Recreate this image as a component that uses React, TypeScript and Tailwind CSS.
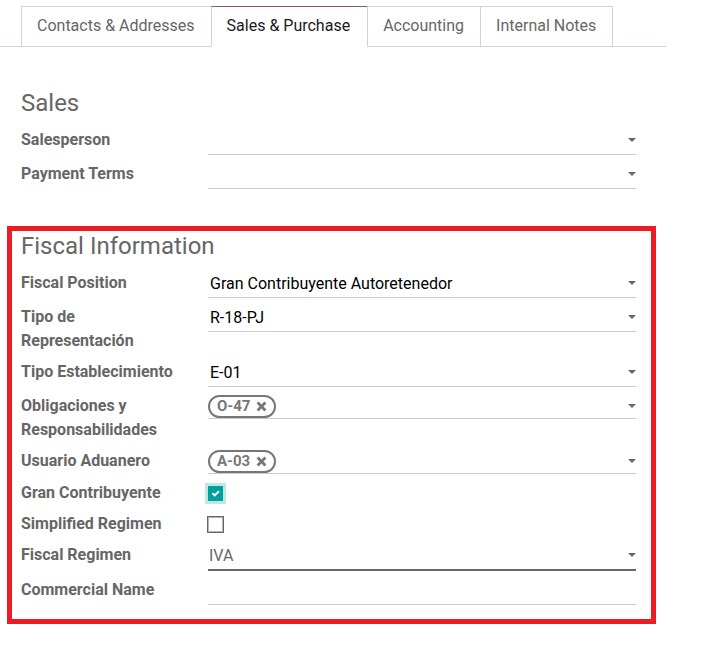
import React, { useState } from "react";

const tabs = ["Contacts & Addresses", "Sales & Purchase", "Accounting", "Internal Notes"];

function Caret() {
  return (
    <svg
      viewBox="0 0 8 4"
      className="pointer-events-none absolute top-2.5 right-0 h-1 w-2 fill-[#666666]"
      aria-hidden="true"
    >
      <path d="M0 0h8L4 4z" />
    </svg>
  );
}

function Row({ id, label, children }: { id: string; label: string; children: React.ReactNode }) {
  return (
    <div className="flex items-start">
      <label htmlFor={id} className="w-[187px] shrink-0 pr-6 leading-6 font-bold">
        {label}
      </label>
      <div className="min-w-0 flex-1">{children}</div>
    </div>
  );
}

function SelectField({ id, label, value = "" }: { id: string; label: string; value?: string }) {
  return (
    <Row id={id} label={label}>
      <div className="relative h-[27px] border-b border-[#cccccc]">
        <select id={id} defaultValue={value} className="block h-full w-full appearance-none px-0.5 text-black outline-none">
          <option value={value}>{value}</option>
        </select>
        <Caret />
      </div>
    </Row>
  );
}

function TagField({ id, label, tag }: { id: string; label: string; tag: string }) {
  return (
    <Row id={id} label={label}>
      <div className="relative flex h-[25px] items-center border-b border-[#cccccc]">
        <span className="flex h-[23px] items-center gap-1.5 rounded-full border-2 border-[#777777] px-[7px] text-[15px] leading-5 font-bold text-[#777777]">
          {tag}
          <button type="button" aria-label={`Remove ${tag}`} className="block">
            <svg viewBox="0 0 11 11" className="h-[11px] w-[11px]" fill="currentColor" aria-hidden="true">
              <path d="M2.6.6 5.5 3.5 8.4.6l2 2-2.9 2.9 2.9 2.9-2 2-2.9-2.9-2.9 2.9-2-2 2.9-2.9L.6 2.6z" />
            </svg>
          </button>
        </span>
        <select id={id} className="h-full min-w-0 flex-1 appearance-none outline-none" defaultValue="">
          <option value=""></option>
        </select>
        <Caret />
      </div>
    </Row>
  );
}

function CheckField({ id, label, checked = false }: { id: string; label: string; checked?: boolean }) {
  const [on, setOn] = useState(checked);
  return (
    <Row id={id} label={label}>
      <div className="flex h-6 items-center">
        <span className="relative flex">
          <input
            id={id}
            type="checkbox"
            checked={on}
            onChange={(e) => setOn(e.target.checked)}
            className="h-[15px] w-[15px] appearance-none border border-[#adb5bd] bg-white ring-1 ring-[#666666] checked:border-[#00a09d] checked:bg-[#00a09d] checked:ring-3 checked:ring-[#bfe7e6]"
          />
          {on && (
            <svg viewBox="0 0 15 15" className="pointer-events-none absolute inset-0 h-[15px] w-[15px]" aria-hidden="true">
              <path d="M4.5 7.3 6.7 9.4 11 5.2" fill="none" stroke="#ffffff" strokeWidth="2" />
            </svg>
          )}
        </span>
      </div>
    </Row>
  );
}

export default function App() {
  const [active, setActive] = useState(1);
  return (
    <main className="bg-white pt-1.5 pr-[41px] font-['Roboto','Liberation_Sans',sans-serif] text-base text-[#666666]">
      <div role="tablist" className="flex border-b border-[#ced4da] pl-[21px]">
        {tabs.map((tab, i) => (
          <button
            key={tab}
            type="button"
            role="tab"
            aria-selected={i === active}
            onClick={() => setActive(i)}
            className={`-mb-px h-[41px] border pr-4 pl-[15px] pb-0.5 whitespace-nowrap ${i > 0 ? "-ml-px" : ""} ${
              i === active
                ? "border-x-[#ced4da] border-t-[#875a7b] border-b-white pr-[17px] text-[#1a1a1a]"
                : "border-[#ced4da]"
            }`}
          >
            {tab}
          </button>
        ))}
      </div>

      <section className="mt-[41px] pr-[30px] pl-[21px]">
        <h2 className="mb-2.5 text-2xl leading-[30px]">Sales</h2>
        <div className="flex flex-col gap-[7px]">
          <SelectField id="salesperson" label="Salesperson" />
          <SelectField id="payment-terms" label="Payment Terms" />
        </div>
      </section>

      <section className="mt-[37px] mr-2.5 ml-[7px] border-5 border-[#ed1c24] pr-[15px] pb-[14px] pl-[9px]">
        <h2 className="mb-2.5 text-2xl leading-[30px]">Fiscal Information</h2>
        <div className="flex flex-col gap-[7px]">
          <SelectField id="fiscal-position" label="Fiscal Position" value="Gran Contribuyente Autoretenedor" />
          <SelectField id="representacion" label="Tipo de Representación" value="R-18-PJ" />
          <SelectField id="establecimiento" label="Tipo Establecimiento" value="E-01" />
          <TagField id="obligaciones" label="Obligaciones y Responsabilidades" tag="O-47" />
          <TagField id="aduanero" label="Usuario Aduanero" tag="A-03" />
          <CheckField id="gran-contribuyente" label="Gran Contribuyente" checked />
          <CheckField id="simplified" label="Simplified Regimen" />
          <Row id="fiscal-regimen" label="Fiscal Regimen">
            <div className="relative h-7 border-b-2 border-[#666666]">
              <select id="fiscal-regimen" className="block h-full w-full appearance-none px-px outline-none" defaultValue="IVA">
                <option value="IVA">IVA</option>
              </select>
              <Caret />
            </div>
          </Row>
          <Row id="commercial-name" label="Commercial Name">
            <input
              id="commercial-name"
              type="text"
              className="block h-[27px] w-full border-b border-[#cccccc] px-0.5 text-black outline-none"
            />
          </Row>
        </div>
      </section>
    </main>
  );
}
